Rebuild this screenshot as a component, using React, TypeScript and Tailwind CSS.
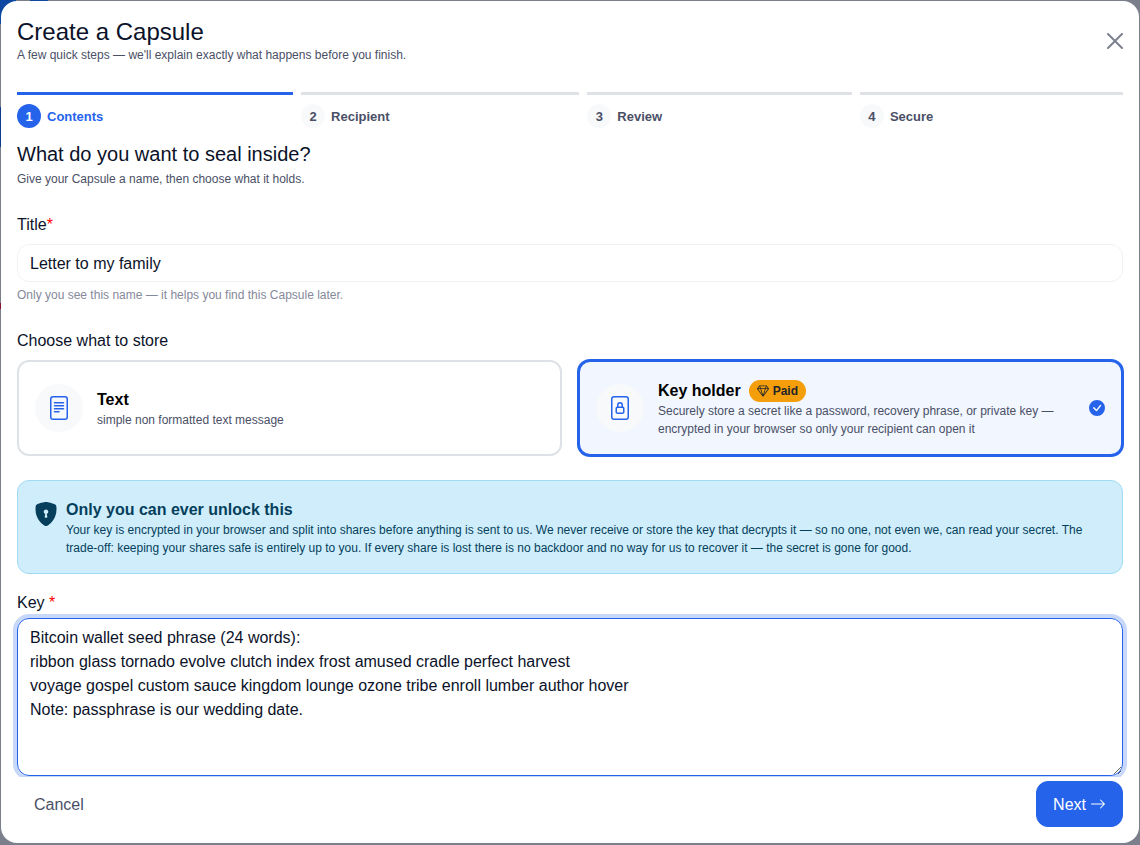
import { useState } from "react";
import type { ReactNode } from "react";
import {
  BsArrowRight,
  BsCheckCircleFill,
  BsFileLock,
  BsFileText,
  BsGem,
  BsShieldLockFill,
} from "react-icons/bs";

const steps = ["Contents", "Recipient", "Review", "Secure"];

const seed = `Bitcoin wallet seed phrase (24 words):
ribbon glass tornado evolve clutch index frost amused cradle perfect harvest
voyage gospel custom sauce kingdom lounge ozone tribe enroll lumber author hover
Note: passphrase is our wedding date.`;

function Stepper({ current }: { current: number }) {
  return (
    <ol className="mt-7 flex gap-2">
      {steps.map((name, i) => {
        const active = i === current;
        return (
          <li
            key={name}
            aria-current={active ? "step" : undefined}
            className={`flex flex-auto items-center gap-1.5 border-t-3 pt-[9px] text-[13px] font-bold ${
              active ? "border-[#2563eb] text-[#2563eb]" : "border-[#dee2e6] text-[#4a4f66]"
            }`}
          >
            <span
              className={`flex size-6 items-center justify-center rounded-full pt-px ${
                active ? "bg-[#2563eb] text-white" : "bg-[#f8f9fa]"
              }`}
            >
              {i + 1}
            </span>
            <span className="pt-px">{name}</span>
          </li>
        );
      })}
    </ol>
  );
}

type CardProps = {
  icon: ReactNode;
  title: string;
  text: string;
  paid?: boolean;
  checked: boolean;
  onSelect: () => void;
};

function StoreCard({ icon, title, text, paid, checked, onSelect }: CardProps) {
  return (
    <label
      className={`relative flex min-h-24 cursor-pointer items-center gap-3.5 rounded-xl border-2 px-4 py-3.5 ${
        checked ? "border-[#2563eb] bg-[#f1f6ff] ring-1 ring-[#2563eb]" : "border-[#dee2e6] bg-white"
      }`}
    >
      <input type="radio" name="store" className="sr-only" checked={checked} onChange={onSelect} />
      <span className="flex size-12 shrink-0 items-center justify-center rounded-full bg-[#f8f9fa] text-2xl text-[#2563eb]">
        {icon}
      </span>
      <span className="flex-1">
        <span className="flex h-6 items-center gap-2 pt-px text-base font-bold text-black">
          {title}
          {paid && (
            <span className="flex h-[22px] items-center gap-1 rounded-full bg-[#f59e0b] px-2 text-xs text-[#212529]">
              <BsGem aria-hidden />
              Paid
            </span>
          )}
        </span>
        <span className="block text-xs leading-[18px] text-[#4a4f66]">{text}</span>
      </span>
      {checked && <BsCheckCircleFill className="ml-5 size-4 shrink-0 text-[#2563eb]" aria-hidden />}
    </label>
  );
}

export default function App() {
  const [store, setStore] = useState("key");
  const [title, setTitle] = useState("Letter to my family");
  const [secret, setSecret] = useState(seed);

  return (
    <div className="relative flex min-h-screen flex-col bg-[#7b7f8c] px-px pt-px pb-0.5 font-['Liberation_Sans',Arial,sans-serif] text-[#0b1229]">
      <div className="absolute top-0 left-0 h-6 w-4 bg-[#0d47a1]" />
      <div className="absolute top-0 left-[30px] h-px w-[18px] bg-[#0d47a1]" />
      <div className="absolute top-[107px] left-0 h-10 w-px bg-[#0d3a8c]" />
      <div className="absolute top-[303px] left-0 h-1.5 w-px bg-[#8a1030]" />
      <main
        role="dialog"
        aria-labelledby="dialog-title"
        className="relative flex flex-1 flex-col rounded-2xl bg-white"
      >
        <div className="flex-1 overflow-hidden px-4 pt-4 pb-px">
          <header className="flex items-start justify-between">
            <div>
              <h1 id="dialog-title" className="text-2xl leading-[29px]">
                Create a Capsule
              </h1>
              <p className="text-xs leading-[18px] text-[#4a4f66]">
                A few quick steps — we'll explain exactly what happens before you finish.
              </p>
            </div>
            <button type="button" aria-label="Close" className="mt-4 text-[#7d818f]">
              <svg viewBox="0 0 16 16" className="size-4" fill="currentColor" aria-hidden>
                <path d="M.293.293a1 1 0 0 1 1.414 0L8 6.586 14.293.293a1 1 0 1 1 1.414 1.414L9.414 8l6.293 6.293a1 1 0 0 1-1.414 1.414L8 9.414l-6.293 6.293a1 1 0 0 1-1.414-1.414L6.586 8 .293 1.707a1 1 0 0 1 0-1.414z" />
              </svg>
            </button>
          </header>

          <Stepper current={0} />

          <h2 className="mt-3.5 text-xl leading-6">What do you want to seal inside?</h2>
          <p className="mt-1 text-xs leading-[18px] text-[#4a4f66]">
            Give your Capsule a name, then choose what it holds.
          </p>

          <label htmlFor="title" className="mt-6 block pt-px leading-6">
            Title<span className="text-[#ff0000]">*</span>
          </label>
          <input
            id="title"
            value={title}
            onChange={(e) => setTitle(e.target.value)}
            className="mt-[7px] block h-[38px] w-full rounded-xl border border-[#f1f2f4] px-3 pt-0.5 leading-6 outline-none"
          />
          <p className="mt-1 text-xs leading-[18px] text-[#85899a]">
            Only you see this name — it helps you find this Capsule later.
          </p>

          <fieldset className="mt-6">
            <legend className="pt-px leading-6">Choose what to store</legend>
            <div className="mt-[7px] grid grid-cols-2 gap-4">
              <StoreCard
                icon={<BsFileText />}
                title="Text"
                text="simple non formatted text message"
                checked={store === "text"}
                onSelect={() => setStore("text")}
              />
              <StoreCard
                icon={<BsFileLock />}
                title="Key holder"
                text="Securely store a secret like a password, recovery phrase, or private key — encrypted in your browser so only your recipient can open it"
                paid
                checked={store === "key"}
                onSelect={() => setStore("key")}
              />
            </div>
          </fieldset>

          <section className="mt-6 flex gap-2 rounded-xl border border-[#9fdcf3] bg-[#cfedfb] p-4 text-[#053f5c]">
            <BsShieldLockFill className="mt-[5px] size-6 shrink-0" aria-hidden />
            <div>
              <h3 className="h-6 pt-px leading-6 font-bold">Only you can ever unlock this</h3>
              <p className="text-xs leading-[18px]">
                Your key is encrypted in your browser and split into shares before anything is sent to us. We never
                receive or store the key that decrypts it — so no one, not even we, can read your secret. The
                trade-off: keeping your shares safe is entirely up to you. If every share is lost there is no backdoor
                and no way for us to recover it — the secret is gone for good.
              </p>
            </div>
          </section>

          <label htmlFor="key" className="mt-4 block pt-px leading-6">
            Key <span className="text-[#ff0000]">*</span>
          </label>
          <textarea
            id="key"
            value={secret}
            onChange={(e) => setSecret(e.target.value)}
            className="mt-[3px] block h-[158px] w-full resize-y rounded-xl border border-[#2563eb] px-3 pt-[7px] pb-1.5 leading-6 ring-4 ring-[#2563eb]/25 outline-none"
          />
        </div>

        <footer className="flex items-center justify-between px-4 pt-1 pb-4">
          <button type="button" className="border border-transparent px-4 pt-[9px] pb-2 leading-6 text-[#4a4f66]">
            Cancel
          </button>
          <button
            type="button"
            className="flex h-[46px] items-center gap-1 rounded-xl border border-[#2563eb] bg-[#2563eb] px-4 leading-6 font-medium text-white"
          >
            <span className="pt-px">Next</span>
            <BsArrowRight aria-hidden />
          </button>
        </footer>
      </main>
    </div>
  );
}
